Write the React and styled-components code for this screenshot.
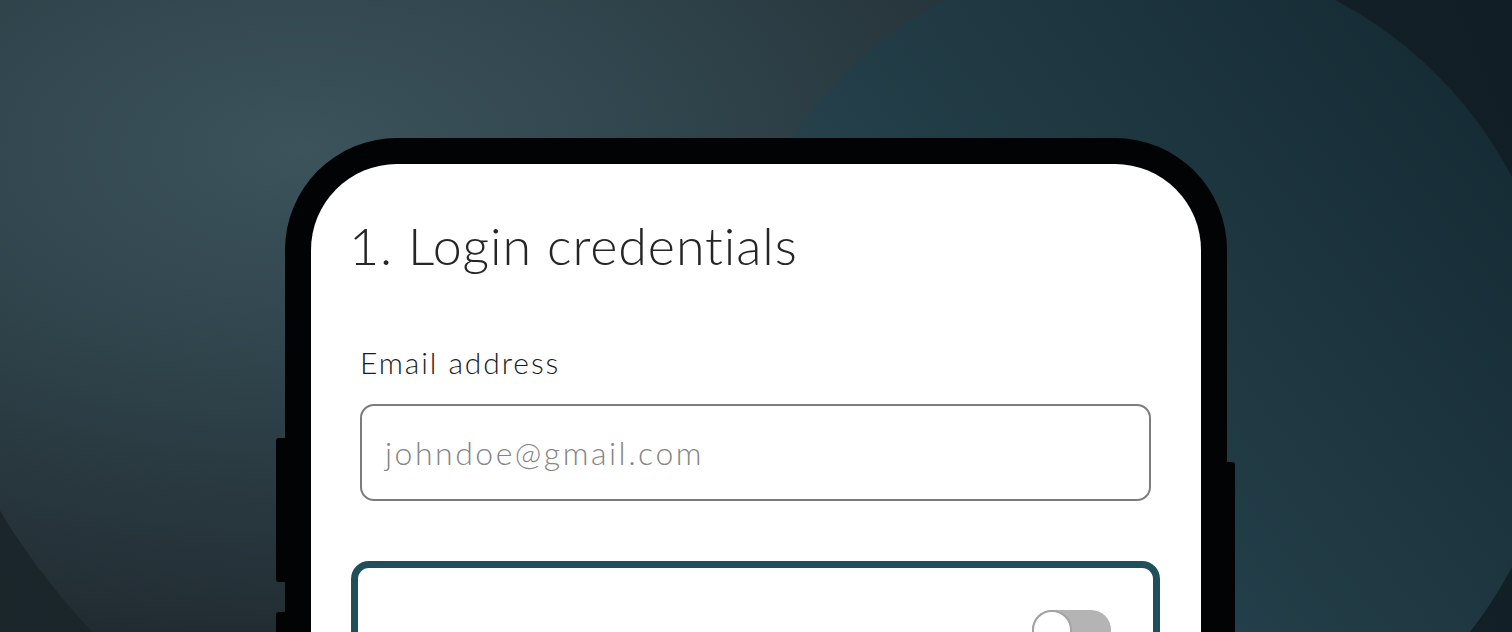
import styled, { createGlobalStyle } from "styled-components";

const backdrop = `<svg xmlns='http://www.w3.org/2000/svg' width='1512' height='632' viewBox='0 0 1512 632'>
<defs>
<radialGradient id='a' cx='0' cy='0' r='1' gradientUnits='userSpaceOnUse' gradientTransform='translate(300 150) scale(900 500)'>
<stop offset='0' stop-color='#3c535c'/>
<stop offset='0.45' stop-color='#2f434b'/>
<stop offset='0.65' stop-color='#2a3a41'/>
<stop offset='0.92' stop-color='#232f35'/>
<stop offset='1' stop-color='#202b31'/>
</radialGradient>
<linearGradient id='b' x1='820' y1='560' x2='1480' y2='60' gradientUnits='userSpaceOnUse'>
<stop offset='0' stop-color='#2c4a55'/>
<stop offset='0.55' stop-color='#1f3842'/>
<stop offset='1' stop-color='#152b34'/>
</linearGradient>
<linearGradient id='c' x1='0' y1='632' x2='1512' y2='0' gradientUnits='userSpaceOnUse'>
<stop offset='0' stop-color='#1b262b'/>
<stop offset='1' stop-color='#111e25'/>
</linearGradient>
</defs>
<rect width='1512' height='632' fill='url(#c)'/>
<circle cx='600' cy='150' r='700' fill='url(#a)'/>
<circle cx='1140' cy='372' r='420' fill='url(#b)'/>
</svg>`;

const GlobalStyle = createGlobalStyle`
  html, body {
    margin: 0;
    padding: 0;
    background: #17232a;
  }
  * {
    box-sizing: border-box;
  }
`;

const Page = styled.main`
  width: 1512px;
  height: 632px;
  overflow: hidden;
  display: flex;
  flex-direction: column;
  align-items: center;
  padding-top: 138px;
  background: url("data:image/svg+xml,${encodeURIComponent(backdrop)}") no-repeat 0 0 / 1512px 632px;
  font-family: Lato, "Open Sans", Arial, sans-serif;
  font-variant-ligatures: none;
`;

const Phone = styled.div`
  position: relative;
  width: 942px;
  flex: 1 0 auto;
  background: #020304;
  border-radius: 112px 112px 0 0;
  padding: 26px 26px 0;
  display: flex;
`;

const SideKey = styled.span`
  position: absolute;
  top: ${(p) => p.$top}px;
  height: ${(p) => p.$height}px;
  width: 9px;
  background: #020304;
  ${(p) =>
    p.$side === "left"
      ? "left: -9px; border-radius: 3px 0 0 3px;"
      : "right: -8px; width: 8px; border-radius: 0 3px 3px 0;"}
`;

const Screen = styled.section`
  flex: 1;
  background: #ffffff;
  border-radius: 86px 86px 0 0;
  padding: 50px 41px 0 40px;
  display: flex;
  flex-direction: column;
`;

const Title = styled.h1`
  margin: 0 0 0 -2px;
  font-size: 52px;
  line-height: 1.2;
  font-weight: 300;
  letter-spacing: 0.9px;
  color: #262626;
`;

const Field = styled.div`
  margin: 68px 9px 0;
  display: flex;
  flex-direction: column;
  gap: 24px;
`;

const Label = styled.label`
  font-size: 30px;
  line-height: 1.2;
  font-weight: 300;
  letter-spacing: 1.9px;
  color: #1c1c1c;
`;

const Input = styled.div`
  height: 97px;
  border: 2px solid #7c7c7c;
  border-radius: 14px;
  display: flex;
  align-items: center;
  padding: 0 23px;
`;

const Placeholder = styled.span`
  font-size: 32px;
  line-height: 1.2;
  font-weight: 300;
  letter-spacing: 2.5px;
  color: #858585;
`;

const OptionCard = styled.div`
  margin-top: 60px;
  border: 7px solid #1f4f5b;
  border-radius: 18px;
  padding: 42px 42px 0;
  height: 160px;
  display: flex;
  justify-content: flex-end;
  align-items: flex-start;
`;

const Track = styled.span`
  width: 79px;
  height: 40px;
  border-radius: 20px;
  background: #b4b4b4;
  display: flex;
  align-items: center;
`;

const Knob = styled.span`
  width: 40px;
  height: 40px;
  border-radius: 50%;
  background: #ffffff;
  border: 2px solid #a3a3a3;
`;

const App = () => {
  return (
    <>
      <GlobalStyle />
      <Page>
        <Phone>
          <SideKey $side="left" $top={300} $height={144} />
          <SideKey $side="left" $top={474} $height={120} />
          <SideKey $side="right" $top={324} $height={200} />
          <Screen>
            <Title>1. Login credentials</Title>
            <Field>
              <Label>Email address</Label>
              <Input>
                <Placeholder>johndoe@gmail.com</Placeholder>
              </Input>
            </Field>
            <OptionCard>
              <Track>
                <Knob />
              </Track>
            </OptionCard>
          </Screen>
        </Phone>
      </Page>
    </>
  );
};

export default App;
